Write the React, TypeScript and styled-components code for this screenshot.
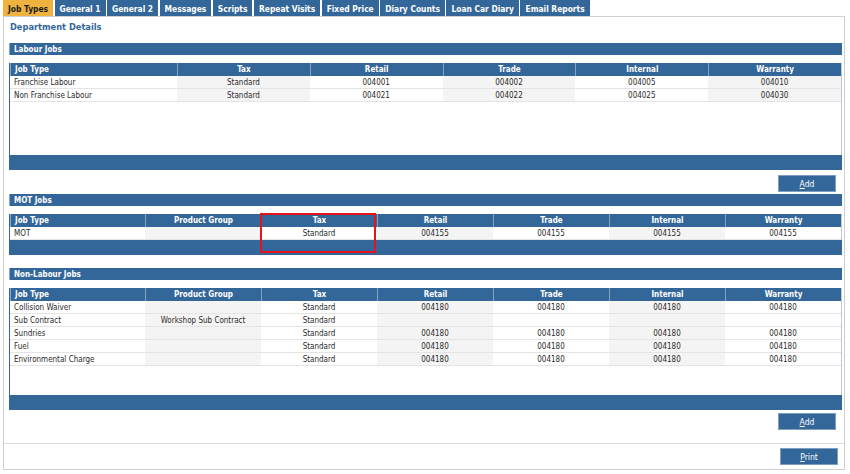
import React from "react";
import styled, { createGlobalStyle } from "styled-components";

const Global = createGlobalStyle`
  html, body { margin: 0; padding: 0; background: #fff; }
  body { font-family: "DejaVu Sans Condensed", "DejaVu Sans", sans-serif; font-stretch: condensed; color: #222; }
  * { box-sizing: border-box; }
`;

const BLUE = "#336699";

const Page = styled.div`
  width: 850px;
  height: 474px;
  padding: 0 5px 0 3px;
`;

const TabBar = styled.div`
  display: flex;
  gap: 1.5px;
  height: 16px;
`;

const Tab = styled.div<{ $active?: boolean }>`
  display: flex;
  align-items: center;
  padding: 1px 5px 0;
  height: 16px;
  font-size: 8.4px;
  font-weight: bold;
  white-space: nowrap;
  background: ${(p) => (p.$active ? "#f0b23e" : BLUE)};
  color: ${(p) => (p.$active ? "#1a1a1a" : "#fff")};
`;

const Panel = styled.div`
  border: 1px solid #cfcfcf;
  height: 454px;
  display: flex;
  flex-direction: column;
`;

const Content = styled.div`
  flex: 1;
  padding: 0 2px 0 5px;
`;

const Title = styled.div`
  height: 26px;
  padding-top: 4px;
  line-height: 12px;
  font-size: 9.2px;
  font-weight: bold;
  color: ${BLUE};
  padding-left: 1px;
`;

const SectionBar = styled.div<{ $gapTop?: number }>`
  height: 12px;
  line-height: 13px;
  margin-top: ${(p) => p.$gapTop ?? 0}px;
  margin-bottom: 8px;
  background: ${BLUE};
  border-left: 1px solid #8aa7c6;
  color: #fff;
  font-size: 8px;
  font-weight: bold;
  padding-left: 4px;
`;

const TableWrap = styled.div`
  position: relative;
`;

const TableBox = styled.div<{ $height: number }>`
  height: ${(p) => p.$height}px;
  border-left: 1px solid ${BLUE};
  border-right: 1px solid #b7c8dc;
  background: #fff;
`;

const Row = styled.div<{ $cols: string }>`
  display: grid;
  grid-template-columns: ${(p) => p.$cols};
  height: 13px;
`;

const HeadCell = styled.div<{ $first?: boolean }>`
  background: ${BLUE};
  color: #fff;
  font-size: 8px;
  font-weight: bold;
  line-height: 14px;
  text-align: ${(p) => (p.$first ? "left" : "center")};
  padding-left: ${(p) => (p.$first ? "4px" : "0")};
  border-left: 1px solid ${(p) => (p.$first ? "#8aa7c6" : "#86a3c3")};
  white-space: nowrap;
  overflow: hidden;
`;

const Cell = styled.div<{ $first?: boolean; $shade?: boolean }>`
  background: ${(p) => (p.$shade ? "#f4f4f4" : "#fff")};
  border-bottom: 1px solid #e4e4e4;
  color: #2a2a2a;
  font-size: 8px;
  line-height: 12px;
  padding-top: 1px;
  text-align: ${(p) => (p.$first ? "left" : "center")};
  padding-left: ${(p) => (p.$first ? "4px" : "0")};
  white-space: nowrap;
  overflow: hidden;
`;

const FooterBar = styled.div`
  height: 15px;
  background: ${BLUE};
`;

const ButtonRow = styled.div<{ $top: number; $bottom: number }>`
  display: flex;
  justify-content: flex-end;
  padding: ${(p) => p.$top}px 6px ${(p) => p.$bottom}px 0;
`;

const Button = styled.button`
  width: 58px;
  height: 17px;
  background: ${BLUE};
  border: 1px solid #7f9ec0;
  color: #fff;
  font-family: inherit;
  font-stretch: condensed;
  font-size: 8.5px;
  padding: 0;
  cursor: pointer;
  u { text-decoration: underline; }
`;

const Highlight = styled.div`
  position: absolute;
  left: 251px;
  top: -1px;
  width: 116px;
  height: 40px;
  border: 2px solid #e3141b;
  pointer-events: none;
`;

const PanelFooter = styled.div`
  border-top: 1px solid #dcdcdc;
  display: flex;
  justify-content: flex-end;
  padding: 4px 6px 4px 0;
`;

type TableProps = {
  cols: string;
  headers: string[];
  rows: string[][];
  height: number;
  children?: React.ReactNode;
};

const DataTable = ({ cols, headers, rows, height, children }: TableProps) => (
  <TableWrap>
    <TableBox $height={height}>
      <Row $cols={cols}>
        {headers.map((h, i) => (
          <HeadCell key={h} $first={i === 0}>
            {h}
          </HeadCell>
        ))}
      </Row>
      {rows.map((r, ri) => (
        <Row $cols={cols} key={ri}>
          {r.map((c, ci) => (
            <Cell key={ci} $first={ci === 0} $shade={ci % 2 === 1}>
              {c}
            </Cell>
          ))}
        </Row>
      ))}
    </TableBox>
    <FooterBar />
    {children}
  </TableWrap>
);

const tabs = [
  "Job Types",
  "General 1",
  "General 2",
  "Messages",
  "Scripts",
  "Repeat Visits",
  "Fixed Price",
  "Diary Counts",
  "Loan Car Diary",
  "Email Reports",
];

const labourCols = "167px repeat(5, 1fr)";
const motCols = "135px repeat(6, 1fr)";

const labourHeaders = ["Job Type", "Tax", "Retail", "Trade", "Internal", "Warranty"];
const motHeaders = ["Job Type", "Product Group", "Tax", "Retail", "Trade", "Internal", "Warranty"];

const labourRows = [
  ["Franchise Labour", "Standard", "004001", "004002", "004005", "004010"],
  ["Non Franchise Labour", "Standard", "004021", "004022", "004025", "004030"],
];

const motRows = [["MOT", "", "Standard", "004155", "004155", "004155", "004155"]];

const nonLabourRows = [
  ["Collision Waiver", "", "Standard", "004180", "004180", "004180", "004180"],
  ["Sub Contract", "Workshop Sub Contract", "Standard", "", "", "", ""],
  ["Sundries", "", "Standard", "004180", "004180", "004180", "004180"],
  ["Fuel", "", "Standard", "004180", "004180", "004180", "004180"],
  ["Environmental Charge", "", "Standard", "004180", "004180", "004180", "004180"],
];

export default function App() {
  return (
    <>
      <Global />
      <Page>
        <TabBar>
          {tabs.map((t, i) => (
            <Tab key={t} $active={i === 0}>
              {t}
            </Tab>
          ))}
        </TabBar>
        <Panel>
          <Content>
            <Title>Department Details</Title>

            <SectionBar>Labour Jobs</SectionBar>
            <DataTable cols={labourCols} headers={labourHeaders} rows={labourRows} height={92} />
            <ButtonRow $top={5} $bottom={2}>
              <Button>
                <u>A</u>dd
              </Button>
            </ButtonRow>

            <SectionBar>MOT Jobs</SectionBar>
            <DataTable cols={motCols} headers={motHeaders} rows={motRows} height={26}>
              <Highlight />
            </DataTable>

            <SectionBar $gapTop={13}>Non-Labour Jobs</SectionBar>
            <DataTable cols={motCols} headers={motHeaders} rows={nonLabourRows} height={107} />
            <ButtonRow $top={3} $bottom={0}>
              <Button>
                <u>A</u>dd
              </Button>
            </ButtonRow>
          </Content>
          <PanelFooter>
            <Button>
              <u>P</u>rint
            </Button>
          </PanelFooter>
        </Panel>
      </Page>
    </>
  );
}
